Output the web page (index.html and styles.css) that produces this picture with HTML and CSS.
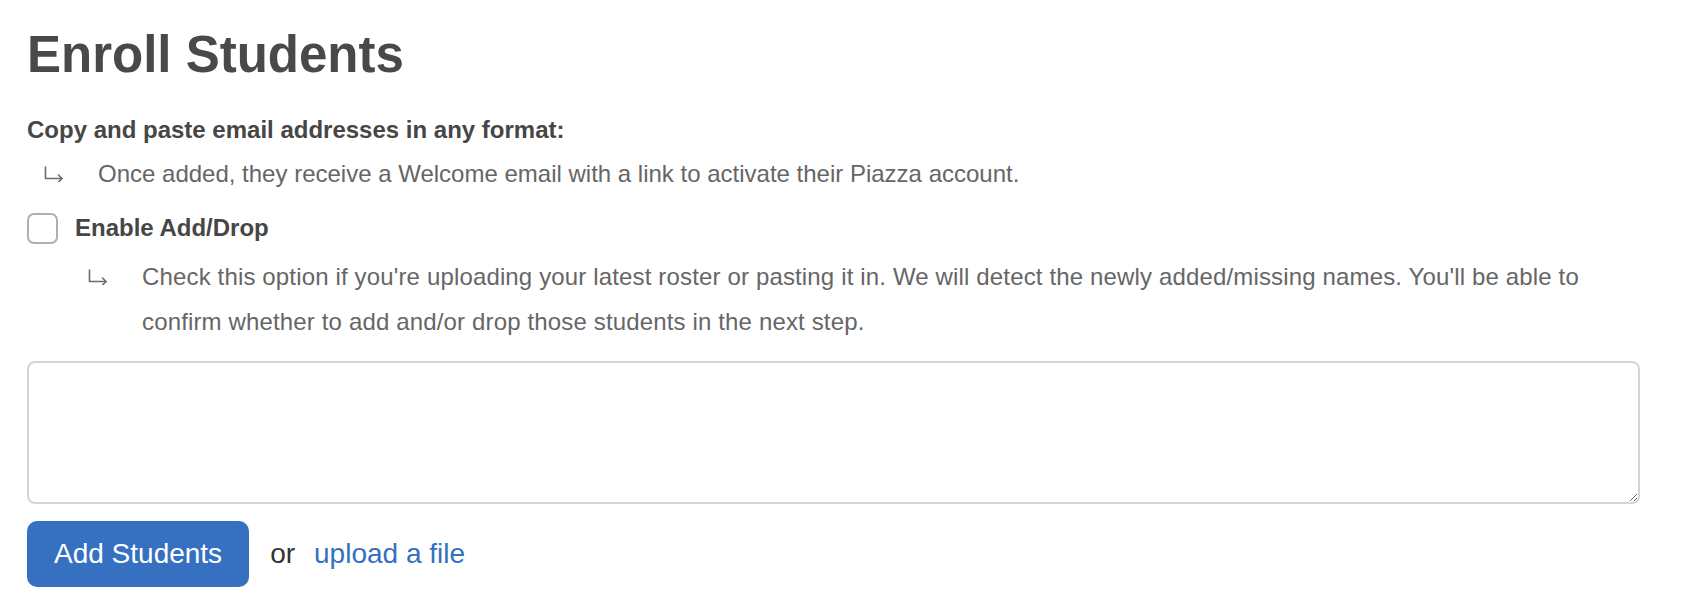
FILE: index.html
```html
<!DOCTYPE html>
<html lang="en">
<head>
<meta charset="utf-8">
<title>Enroll Students</title>
<link rel="stylesheet" href="styles.css">
</head>
<body>
<main class="page">
  <h1 class="title">Enroll Students</h1>
  <p class="lead">Copy and paste email addresses in any format:</p>
  <div class="hint hint-first">
    <span class="hint-arrow">
      <svg width="20" height="16" viewBox="0 0 20 16" fill="none" stroke="#6b6b6b" stroke-width="1.6" stroke-linecap="round" stroke-linejoin="round"><path d="M1.5 1V12.5H18"/><path d="M14.5 9L18 12.5L14.5 16"/></svg>
    </span>
    <span class="hint-text">Once added, they receive a Welcome email with a link to activate their Piazza account.</span>
  </div>
  <label class="check-row">
    <input type="checkbox" class="check">
    <span class="check-label">Enable Add/Drop</span>
  </label>
  <div class="hint hint-second">
    <span class="hint-arrow">
      <svg width="20" height="16" viewBox="0 0 20 16" fill="none" stroke="#6b6b6b" stroke-width="1.6" stroke-linecap="round" stroke-linejoin="round"><path d="M1.5 1V12.5H18"/><path d="M14.5 9L18 12.5L14.5 16"/></svg>
    </span>
    <span class="hint-text">Check this option if you're uploading your latest roster or pasting it in. We will detect the newly added/missing names. You'll be able to confirm whether to add and/or drop those students in the next step.</span>
  </div>
  <textarea class="emails" aria-label="Email addresses"></textarea>
  <div class="actions">
    <button type="button" class="btn-primary">Add Students</button>
    <span class="or">or</span>
    <a href="#" class="upload-link">upload a file</a>
  </div>
</main>
</body>
</html>
```
FILE: styles.css
```css
html, body {
  margin: 0;
  padding: 0;
  background: #ffffff;
}

body {
  font-family: "Liberation Sans", Arial, Helvetica, sans-serif;
  color: #454545;
}

.page {
  padding: 25px 56px 0 27px;
}

.title {
  margin: 0 0 27px;
  font-size: 51px;
  line-height: 60px;
  font-weight: 700;
  color: #48494b;
}

.lead {
  margin: 0;
  font-size: 24px;
  line-height: 36px;
  font-weight: 700;
  color: #464646;
}

.hint {
  display: flex;
  align-items: flex-start;
  font-size: 24px;
  line-height: 36px;
  color: #666666;
}

.hint-first {
  margin-top: 8px;
  padding-left: 17px;
}

.hint-second {
  margin-top: 8px;
  padding-left: 61px;
  line-height: 45px;
  letter-spacing: 0.15px;
}

.hint-arrow {
  flex: 0 0 54px;
  display: flex;
  align-items: center;
  height: 36px;
}

.hint-second .hint-arrow {
  height: 45px;
}

.hint-arrow svg {
  display: block;
}

.hint-text {
  flex: 1;
}

.check-row {
  display: flex;
  align-items: center;
  gap: 17px;
  margin-top: 18px;
  font-size: 24px;
  line-height: 36px;
}

.check {
  appearance: none;
  -webkit-appearance: none;
  margin: 0;
  width: 31px;
  height: 31px;
  box-sizing: border-box;
  border: 2px solid #aab0ba;
  border-radius: 7px;
  background: #ffffff;
}

.check-label {
  font-weight: 700;
  color: #464646;
}

.emails {
  display: block;
  box-sizing: border-box;
  width: 100%;
  height: 143px;
  margin-top: 17px;
  border: 2px solid #d2d5da;
  border-radius: 8px;
  padding: 8px 10px;
  font-family: inherit;
  font-size: 20px;
  resize: vertical;
  outline: none;
}

.actions {
  display: flex;
  align-items: center;
  margin-top: 17px;
  font-size: 28px;
}

.btn-primary {
  height: 66px;
  padding: 0 27px;
  border: none;
  border-radius: 10px;
  background: #3570c1;
  color: #ffffff;
  font-family: inherit;
  font-size: 28px;
  cursor: pointer;
}

.or {
  margin-left: 21px;
  color: #333333;
}

.upload-link {
  margin-left: 19px;
  color: #3470c0;
  text-decoration: none;
}
```
